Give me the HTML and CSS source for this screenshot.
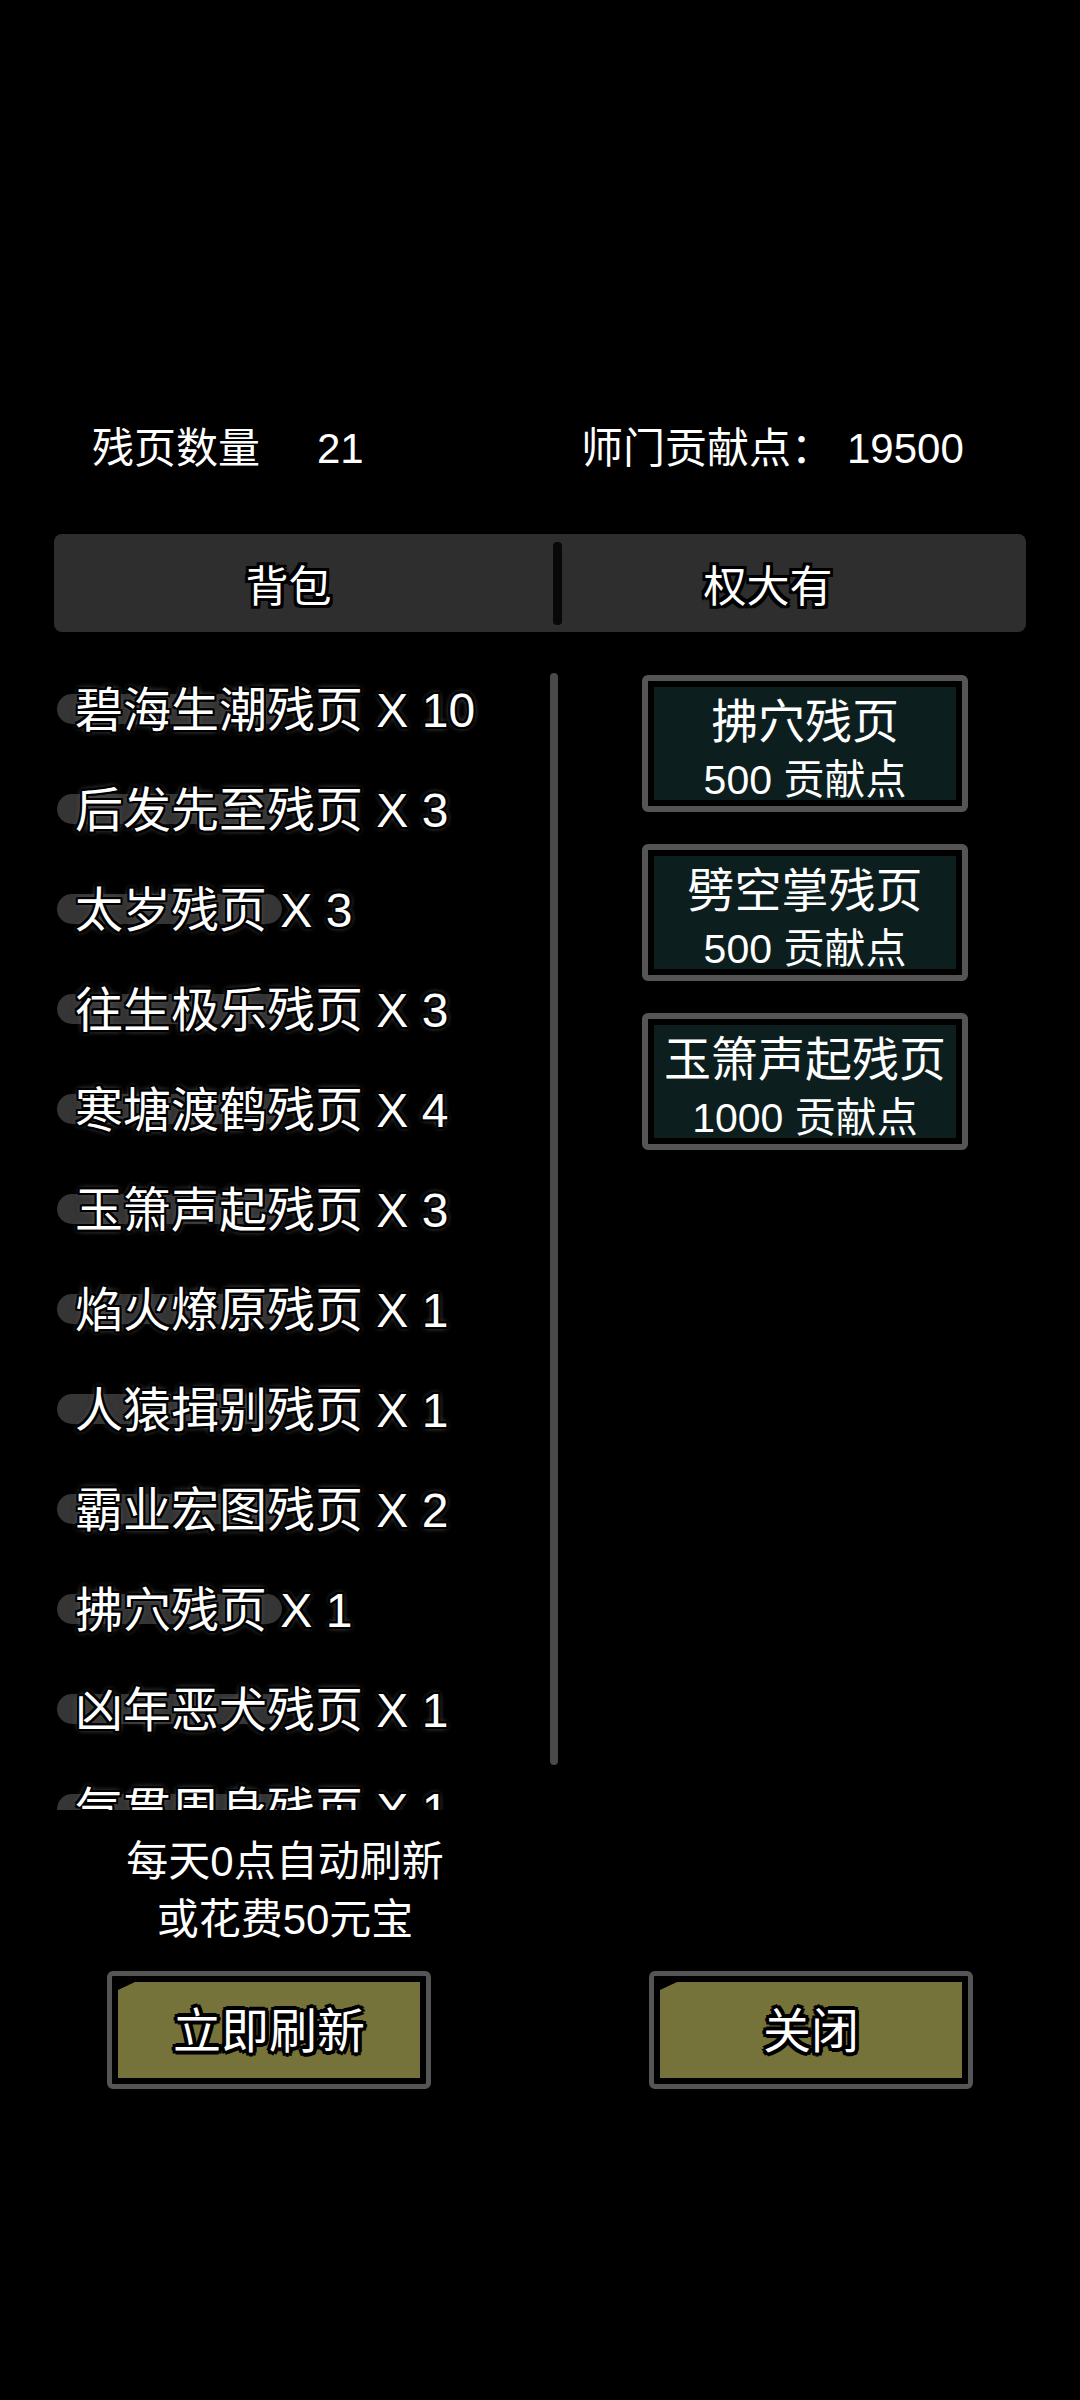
FILE: index.html
```html
<html>
<head>
	<title>残页兑换</title>
	<meta charset="utf-8" />
	<link rel="stylesheet" href="styles.css">
</head>
<body>
	<div class="stats">
		<div class="stat-left">
			<span>残页数量</span>
			<span class="stat-num">21</span>
		</div>
		<div class="stat-right">
			<span>师门贡献点：</span>
			<span class="stat-num">19500</span>
		</div>
	</div>

	<div class="tabs">
		<div class="tab tab-bag">背包</div>
		<div class="tab-divider"></div>
		<div class="tab tab-shop">权大有</div>
	</div>

	<div class="main">
		<div class="bag">
			<div class="bag-list">
				<div class="bag-item"><span>碧海生潮残页 X 10</span></div>
				<div class="bag-item"><span>后发先至残页 X 3</span></div>
				<div class="bag-item"><span>太岁残页 X 3</span></div>
				<div class="bag-item"><span>往生极乐残页 X 3</span></div>
				<div class="bag-item"><span>寒塘渡鹤残页 X 4</span></div>
				<div class="bag-item"><span>玉箫声起残页 X 3</span></div>
				<div class="bag-item"><span>焰火燎原残页 X 1</span></div>
				<div class="bag-item"><span>人猿揖别残页 X 1</span></div>
				<div class="bag-item"><span>霸业宏图残页 X 2</span></div>
				<div class="bag-item"><span>拂穴残页 X 1</span></div>
				<div class="bag-item"><span>凶年恶犬残页 X 1</span></div>
				<div class="bag-item"><span>气贯周身残页 X 1</span></div>
			</div>
			<div class="scrollbar"></div>
		</div>

		<div class="shop">
			<div class="shop-item">
				<div class="shop-inner">
					<div class="shop-name">拂穴残页</div>
					<div class="shop-price">500 贡献点</div>
				</div>
			</div>
			<div class="shop-item">
				<div class="shop-inner">
					<div class="shop-name">劈空掌残页</div>
					<div class="shop-price">500 贡献点</div>
				</div>
			</div>
			<div class="shop-item">
				<div class="shop-inner">
					<div class="shop-name">玉箫声起残页</div>
					<div class="shop-price">1000 贡献点</div>
				</div>
			</div>
		</div>
	</div>

	<div class="note">
		<div>每天0点自动刷新</div>
		<div>或花费50元宝</div>
	</div>

	<div class="actions">
		<div class="action-button">
			<div class="action-inner"><span class="action-label">立即刷新</span></div>
		</div>
		<div class="action-button">
			<div class="action-inner"><span class="action-label">关闭</span></div>
		</div>
	</div>
</body>
</html>
```

FILE: styles.css
```css
html {
	background-color: #000;
}
body {
	margin: 0;
	width: 1080px;
	height: 2400px;
	overflow: hidden;
	background-color: #000;
	color: #fff;
	font-family: "Liberation Sans", "Noto Sans CJK SC", sans-serif;
}

/* top counters */
.stats {
	display: flex;
	padding: 424px 0 0 92px;
	font-size: 42px;
	line-height: 50px;
}
.stat-left {
	width: 489px;
	display: flex;
	gap: 57px;
}
.stat-right {
	display: flex;
	gap: 14px;
}

/* tab bar */
.tabs {
	margin: 60px 54px 0 54px;
	height: 98px;
	background-color: #2e2e2e;
	border-radius: 8px;
	display: grid;
	grid-template-columns: 499px 9px 1fr;
	align-items: center;
}
.tab {
	text-align: center;
	font-size: 43px;
	padding-top: 9px;
	line-height: 89px;
	text-shadow: -3px -3px 0 #000, 3px -3px 0 #000, -3px 3px 0 #000, 3px 3px 0 #000,
		0 -3px 0 #000, 0 3px 0 #000, -3px 0 0 #000, 3px 0 0 #000;
}
.tab-bag {
	padding-right: 30px;
}
.tab-shop {
	padding-right: 52px;
}
.tab-divider {
	height: 83px;
	background-color: #080808;
	border-radius: 4px;
}

/* bag list + shop */
.main {
	display: flex;
	margin-top: 26px;
}
.bag {
	display: flex;
	width: 558px;
}
.bag-list {
	width: 550px;
	height: 1152px;
	overflow: hidden;
}
.bag-item {
	position: relative;
	height: 100px;
	box-sizing: border-box;
	padding: 0 0 4px 75px;
	display: flex;
	align-items: center;
	font-size: 48px;
	white-space: nowrap;
}
.bag-item::before {
	content: "";
	position: absolute;
	left: 57px;
	top: 36px;
	width: 225px;
	height: 30px;
	border-radius: 15px;
	background-color: #353535;
}
.bag-item > span {
	position: relative;
	text-shadow: -2px -2px 0 #000, 2px -2px 0 #000, -2px 2px 0 #000, 2px 2px 0 #000,
		0 -2px 0 #000, 0 2px 0 #000, -2px 0 0 #000, 2px 0 0 #000,
		0 0 6px #555, 0 0 6px #555;
}
.scrollbar {
	width: 8px;
	height: 1092px;
	margin-top: 15px;
	background-color: #4a4a4a;
	border-radius: 4px;
}

.shop {
	display: flex;
	flex-direction: column;
	gap: 32px;
	margin-left: 84px;
	padding-top: 17px;
}
.shop-item {
	width: 326px;
	height: 137px;
	box-sizing: border-box;
	border: 6px solid #555;
	border-radius: 6px;
	padding: 6px;
	background-color: #000;
}
.shop-inner {
	height: 100%;
	background-color: #0c1e1e;
	text-align: center;
	white-space: nowrap;
}
.shop-name {
	padding-top: 7px;
	font-size: 47px;
	line-height: 56px;
}
.shop-price {
	font-size: 41px;
	line-height: 60px;
}

/* refresh note */
.note {
	width: 570px;
	margin-top: 23px;
	text-align: center;
	font-size: 42px;
	line-height: 58px;
}

/* bottom buttons */
.actions {
	display: flex;
	gap: 218px;
	margin-top: 22px;
	padding-left: 107px;
}
.action-button {
	width: 324px;
	height: 118px;
	box-sizing: border-box;
	border: 5px solid #555;
	border-radius: 6px;
	padding: 6px;
	background-color: #000;
}
.action-inner {
	height: 100%;
	background-color: #76733a;
	clip-path: polygon(0 8px, 17px 0, 100% 0, 100% 100%, 0 100%);
	display: flex;
	align-items: center;
	justify-content: center;
}
.action-label {
	font-size: 48px;
	line-height: 1;
	padding-top: 4px;
	text-shadow: -3px -3px 0 #000, 3px -3px 0 #000, -3px 3px 0 #000, 3px 3px 0 #000,
		0 -4px 0 #000, 0 4px 0 #000, -4px 0 0 #000, 4px 0 0 #000;
}
```
